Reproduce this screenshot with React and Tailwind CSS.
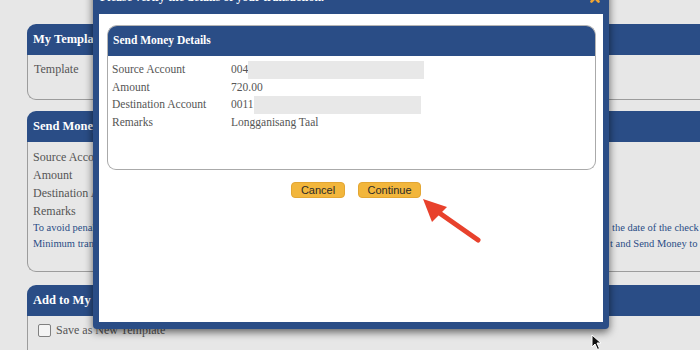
import React from "react";

const BLUE = "bg-[#2a4d86]";

function Row({ label, children }) {
  return (
    <div className="flex h-[17.5px] items-center leading-[17.5px]">
      <div className="w-[119px] shrink-0">{label}</div>
      <div className="flex items-center whitespace-nowrap">{children}</div>
    </div>
  );
}

export default function App() {
  return (
    <div className="relative w-[700px] h-[350px] overflow-hidden bg-[#e7e7e7] font-['Liberation_Serif',serif]">
      {/* background page */}
      <div className="flex flex-col pl-[27px] pt-[24px]">
        {/* My Templates */}
        <div className="w-[720px]">
          <div className={`${BLUE} h-[31px] rounded-tl-[9px] px-[6px] flex items-center text-white font-bold text-[12.5px]`}>
            My Templates
          </div>
          <div className="h-[45px] border-l border-b border-[#9c9c9c] rounded-bl-[9px] px-[6px] pt-[5px] text-[12px] text-[#555] leading-[18px]">
            Template
          </div>
        </div>

        {/* Send Money */}
        <div className="w-[720px] mt-[11px]">
          <div className={`${BLUE} h-[31px] rounded-tl-[9px] px-[6px] flex items-center text-white font-bold text-[12.5px]`}>
            Send Money
          </div>
          <div className="h-[130px] border-l border-b border-[#9c9c9c] rounded-bl-[9px] px-[5px] pt-[6px] text-[12px] text-[#555]">
            <div className="leading-[18px]">Source Account</div>
            <div className="leading-[18px]">Amount</div>
            <div className="leading-[18px]">Destination Account</div>
            <div className="leading-[18px]">Remarks</div>
            <div className="flex text-[10.5px] leading-[16px] text-[#2a4d86] whitespace-nowrap">
              <div className="w-[579px] shrink-0 overflow-hidden">To avoid penalties, please make sure that your account has sufficient funds on</div>
              <div>the date of the check</div>
            </div>
            <div className="flex text-[10.5px] leading-[16px] text-[#2a4d86] whitespace-nowrap">
              <div className="w-[577px] shrink-0 overflow-hidden">Minimum transaction amount applies. Please select your Source Accoun</div>
              <div>t and Send Money to</div>
            </div>
          </div>
        </div>

        {/* Add to My Templates */}
        <div className="w-[720px] mt-[13px]">
          <div className={`${BLUE} h-[31px] rounded-tl-[9px] px-[6px] flex items-center text-white font-bold text-[12.5px]`}>
            Add to My Templates
          </div>
          <div className="h-[60px] border-l border-[#9c9c9c] pl-[10px] pt-[7px] text-[12px] text-[#555]">
            <div className="flex items-center h-[14px] gap-[5px]">
              <div className="w-[13px] h-[13px] border border-[#808080] rounded-[2px] bg-[#f4f4f4]"></div>
              <span>Save as New Template</span>
            </div>
          </div>
        </div>
      </div>

      {/* modal */}
      <div className={`absolute left-[93px] top-[-20px] w-[516px] ${BLUE} rounded-b-[4px] shadow-[0_3px_9px_rgba(0,0,0,0.6)]`}>
        <div className="relative h-[34px] px-[7px] pt-[10px] text-white font-bold text-[12px] leading-[14px]">
          Please verify the details of your transaction.
          <svg className="absolute left-[497px] top-[13px]" width="10" height="10" viewBox="0 0 10 10">
            <path d="M1.5 1.5 L8.5 8.5 M8.5 1.5 L1.5 8.5" stroke="#f2a531" strokeWidth="2.6" strokeLinecap="round" />
          </svg>
        </div>
        <div className="mx-[6px] mb-[7px] h-[308px] bg-white pt-[11px] pl-[8px] pr-[7px]">
          <div className="w-[489px]">
            <div className={`${BLUE} h-[31px] rounded-t-[10px] px-[5px] flex items-center text-white font-bold text-[11.5px] border border-b-0 border-[#b5b5b5]`}>
              Send Money Details
            </div>
            <div className="h-[114px] border border-t-0 border-[#aaaaaa] rounded-b-[9px] pt-[5px] pl-[4px] text-[11.5px] text-[#555]">
              <Row label="Source Account">
                <span>004</span>
                <span className="inline-block w-[176px] h-[18px] bg-[#e8e8e8]"></span>
              </Row>
              <Row label="Amount">720.00</Row>
              <Row label="Destination Account">
                <span>0011</span>
                <span className="inline-block w-[167px] h-[18px] bg-[#e8e8e8]"></span>
              </Row>
              <Row label="Remarks">Longganisang Taal</Row>
            </div>
          </div>
          <div className="flex gap-[13px] mt-[12px] ml-[184px] font-['Liberation_Sans',sans-serif] text-[11px] text-[#2a2a2a]">
            <div className="w-[54px] h-[16px] rounded-[4px] bg-[#f2b63c] border border-[#e3a633] flex items-center justify-center">Cancel</div>
            <div className="w-[63px] h-[16px] rounded-[4px] bg-[#f2b63c] border border-[#e3a633] flex items-center justify-center">Continue</div>
          </div>
        </div>
      </div>

      {/* red arrow annotation */}
      <svg className="absolute left-0 top-0 pointer-events-none" width="700" height="350" viewBox="0 0 700 350">
        <line x1="438" y1="212" x2="478" y2="240" stroke="#e8412c" strokeWidth="5" strokeLinecap="round" />
        <polygon points="423,199 432,222 447,207" fill="#e8412c" />
      </svg>

      {/* mouse cursor */}
      <svg className="absolute left-[591px] top-[334px] pointer-events-none" width="12" height="17" viewBox="0 0 12 17">
        <path d="M1 1 L1 13 L4 10 L6.5 15.5 L8.5 14.5 L6 9 L10 9 Z" fill="#111" stroke="#fff" strokeWidth="1" />
      </svg>
    </div>
  );
}
